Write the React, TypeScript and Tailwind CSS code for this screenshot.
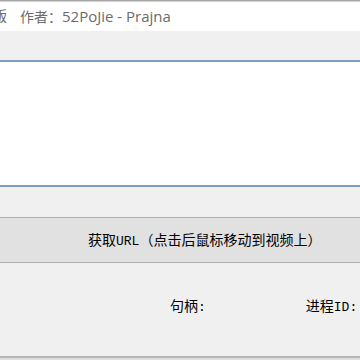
import React from 'react';

const cjk = { fontFamily: '"Noto Sans CJK SC", "Noto Sans", sans-serif' };
const title = { fontFamily: '"Open Sans", "Noto Sans CJK SC", sans-serif' };
const mono = { fontFamily: '"Liberation Mono", monospace' };

const App: React.FC = () => {
    return (
        <div className="w-[360px] h-[360px] overflow-hidden bg-[#f0f0f0] flex flex-col" style={cjk}>
            {/* window top edge */}
            <div className="h-[1px] bg-[#a6a6a6]" />
            <div className="h-[1px] bg-[#d4d4d4]" />

            {/* title */}
            <div className="h-[29px] bg-white flex items-center text-[14px] text-[#6b6b6b] whitespace-nowrap leading-[20px] pb-[1px]" style={title}>
                <span className="ml-[-7px]">版</span>
                <span className="ml-[13px]">作者：<span className="text-[15px]">52PoJie - Prajna</span></span>
            </div>

            <div className="h-[29px]" />

            {/* url box */}
            <div className="h-[127px] bg-white border-t-2 border-b-2 border-t-[#7c9dbf] border-b-[#7c9dbf]" />

            <div className="h-[30px]" />

            {/* button */}
            <button className="h-[46px] w-full bg-[#e1e1e1] border-y border-[#adadad] flex items-center pl-[88px] text-[14px] text-black whitespace-nowrap">
                <span>获取<span className="text-[13px]" style={mono}>URL</span>（点击后鼠标移动到视频上）</span>
            </button>

            {/* info row */}
            <div className="h-[93px] flex items-start pt-[32px] text-[14px] leading-[20px] text-black whitespace-nowrap">
                <span className="ml-[170px]">句柄<span className="text-[13px]" style={mono}>:</span></span>
                <span className="ml-[100px]">进程<span className="text-[13px]" style={mono}>ID:</span></span>
            </div>

            <div className="h-[2px] bg-[#b4b4b4]" />
            <div className="flex-1 bg-[#dedede]" />
        </div>
    );
};

export default App;
